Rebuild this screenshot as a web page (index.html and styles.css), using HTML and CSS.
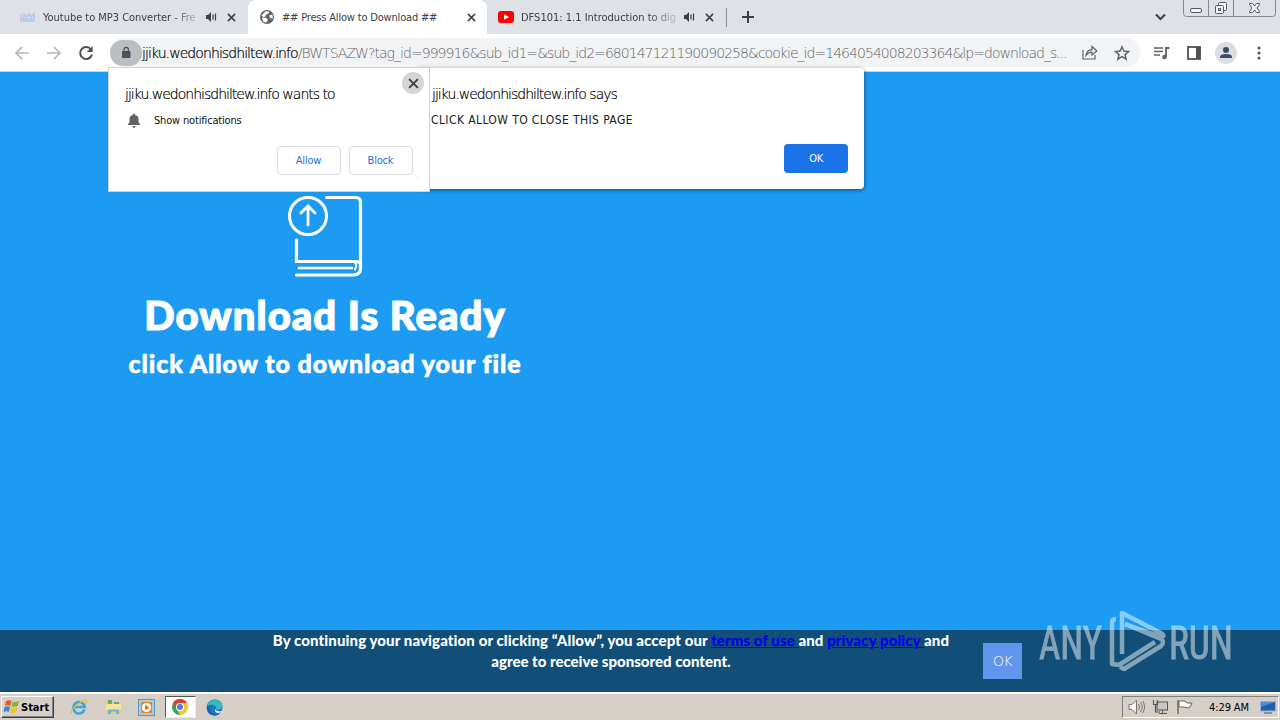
FILE: index.html
```html
<!DOCTYPE html>
<html lang="en">
<head>
<meta charset="utf-8">
<title>## Press Allow to Download ##</title>
<link rel="stylesheet" href="styles.css">
</head>
<body>
<svg width="0" height="0" class="defs">
  <symbol id="speaker" viewBox="0 0 12 12"><path d="M1 4h2l3-3v10L3 8H1z" fill="#3c4043"/><path d="M8 3.5v5M10.500 2.500v7" stroke="#3c4043" stroke-width="1.200"/></symbol>
  <symbol id="cross" viewBox="0 0 10 10"><path d="M1 1l8 8M9 1L1 9" stroke="#3c4043" stroke-width="1.700"/></symbol>
</svg>
<div class="screen">
  <header class="tabs">
    <div class="tab tab-first">
      <svg class="fav" width="16" height="16" viewBox="0 0 16 16"><path d="M1 5v7h13V5l-3 3-2-3-2 3-3-3v6" fill="none" stroke="#b4c8f0" stroke-width="1.600"/><path d="M1 10h13" stroke="#bccdf0" stroke-width="2"/></svg>
      <span class="tab-title t1">Youtube to MP3 Converter - Fre</span>
      <svg class="snd" width="12" height="12"><use href="#speaker"/></svg>
      <svg class="x" width="9" height="9"><use href="#cross"/></svg>
    </div>
    <div class="tab tab-active">
      <svg class="fav" width="16" height="16" viewBox="0 0 16 16"><circle cx="8" cy="8" r="7" fill="#5f6368"/><path d="M2.500 6.500l4-4.200 3.700.2-.8 2.300-2.600.9-.3 1.700-2.200.6zM3 8.500l4 .3 2 2-1.700 3-3.300-1.400zM10 6.500l3.500-1 .3 4-2.600-.3z" fill="#fff"/></svg>
      <span class="tab-title t2">## Press Allow to Download ##</span>
      <svg class="x" width="9" height="9"><use href="#cross"/></svg>
    </div>
    <div class="tab tab-third">
      <svg class="fav" width="16" height="12" viewBox="0 0 16 12"><rect width="16" height="12" rx="3" fill="#f00"/><path d="M6 3.200v5.600L11 6z" fill="#fff"/></svg>
      <span class="tab-title t3">DFS101: 1.1 Introduction to dig</span>
      <svg class="snd" width="12" height="12"><use href="#speaker"/></svg>
      <svg class="x" width="9" height="9"><use href="#cross"/></svg>
    </div>
    <i class="sep"></i>
    <svg class="plus" width="12" height="12" viewBox="0 0 12 12"><path d="M6 0v12M0 6h12" stroke="#3c4043" stroke-width="2"/></svg>
    <svg class="chev" width="11" height="8" viewBox="0 0 11 8"><path d="M1 1.500l4.500 4.500L10 1.500" fill="none" stroke="#3c4043" stroke-width="2"/></svg>
    <svg class="winbtns" width="94" height="17" viewBox="0 0 94 17"><path d="M.5 0v13.500q0 3 3 3h86q3 0 3-3V0M25.500 0v16M50.500 0v16" fill="none" stroke="#85888f"/><g fill="#f4f5f7" stroke="#55585f"><rect x="7.500" y="8.500" width="11" height="4" rx="1.500"/><rect x="35.500" y="2.500" width="8" height="8" rx="1"/><rect x="32.500" y="5.500" width="8" height="8" rx="1"/><rect x="35.500" y="8.500" width="2" height="2"/><path d="M66.500 3.500h3l2 2.500 2-2.500h3v1L74 8l2.500 3.500v1h-3l-2-2.500-2 2.500h-3v-1L69 8l-2.500-3.500z"/></g></svg>
  </header>

  <nav class="toolbar">
    <svg class="nav-ic back" width="16" height="14" viewBox="0 0 16 14"><path d="M15 7H2M8 1L2 7l6 6" fill="none" stroke="#b4b6b9" stroke-width="1.700"/></svg>
    <svg class="nav-ic fwd" width="16" height="14" viewBox="0 0 16 14"><path d="M1 7h13M8 1l6 6-6 6" fill="none" stroke="#b4b6b9" stroke-width="1.700"/></svg>
    <svg class="nav-ic reload" width="16" height="16" viewBox="0 0 16 16"><path d="M13 4.500A6 6 0 1 0 14 9.500" fill="none" stroke="#4d5156" stroke-width="2"/><path d="M14.700 1v6H8.700z" fill="#4d5156"/></svg>
    <div class="omnibox">
      <span class="lock"><svg width="10" height="13" viewBox="0 0 10 13"><rect x="1" y="5" width="8.500" height="7" rx="1" fill="#4d5156"/><path d="M3 5V3.500a2.200 2.200 0 0 1 4.400 0V5" fill="none" stroke="#4d5156" stroke-width="1.300"/></svg></span>
      <span class="url"><span class="host">jjiku.wedonhisdhiltew.info</span><span class="path">/BWTSAZW?tag_id=999916&amp;sub_id1=&amp;sub_id2=680147121190090258&amp;cookie_id=1464054008203364&amp;lp=download_s...</span></span>
      <svg class="share" width="16" height="15" viewBox="0 0 16 15"><path d="M1 5v9h12v-4" fill="none" stroke="#5f6368" stroke-width="1.200"/><path d="M4 10.500q.5-5.500 6-5.800V1.500L14.800 6 10 10V7.200Q6.500 7 4 10.500z" fill="none" stroke="#5f6368" stroke-width="1.200"/></svg>
      <svg class="star" width="16" height="16" viewBox="0 0 16 16"><path d="M8 1.800l1.900 4.300 4.600.4-3.500 3.100 1.100 4.600L8 11.700l-4.100 2.500L5 9.600 1.500 6.500l4.600-.4z" fill="none" stroke="#5f6368" stroke-width="1.500"/></svg>
    </div>
    <svg class="music" width="17" height="14" viewBox="0 0 17 14"><path d="M1 2h9M1 5.500h9M1 9h6" stroke="#5f6368" stroke-width="1.700"/><path d="M13 11V2h3.500" fill="none" stroke="#5f6368" stroke-width="1.800"/><circle cx="11.500" cy="11" r="2.300" fill="#5f6368"/></svg>
    <svg class="panel" width="14" height="14" viewBox="0 0 14 14"><rect x="1" y="1" width="12" height="12" fill="none" stroke="#4d5156" stroke-width="1.800"/><path d="M9 1h4.500v12H9z" fill="#4d5156"/></svg>
    <svg class="avatar" width="22" height="22" viewBox="0 0 22 22"><circle cx="11" cy="11" r="11" fill="#dadde2"/><circle cx="11" cy="8" r="3" fill="#3d4a66"/><path d="M5 16v-1q0-3 6-3t6 3v1z" fill="#3d4a66"/></svg>
    <svg class="dots" width="4" height="14" viewBox="0 0 4 14"><g fill="#4d5156"><circle cx="2" cy="2" r="1.500"/><circle cx="2" cy="7" r="1.500"/><circle cx="2" cy="12" r="1.500"/></g></svg>
  </nav>

  <main class="page">
    <section class="hero">
      <svg width="76" height="84" viewBox="0 0 76 84" fill="none" stroke="#fff" stroke-linecap="round"><circle cx="21" cy="22" r="18.500" stroke-width="3"/><path d="M21 31V13M14 19l7-7 7 7" stroke-width="2.800"/><path d="M39.500 3.500H69q4.500 0 4.500 5V74q0 7-7 7H9.500M9.500 46v21.500H68q5.500 0 5.500 4" stroke-width="3.200"/><path d="M12 74h53" stroke-width="2.600"/><path d="M68 68.500q2.500 2.500 0 7" stroke-width="2"/></svg>
      <h1>Download Is Ready</h1>
      <h2>click Allow to download your file</h2>
    </section>
  </main>

  <footer class="consent">
    <p><span class="line l1">By continuing your navigation or clicking “Allow”, you accept our <a>terms of use </a>and <a>privacy policy </a>and</span><span class="line l2">agree to receive sponsored content.</span></p>
    <button class="consent-ok">OK</button>
  </footer>

  <div class="taskbar">
    <button class="start"><svg width="17" height="16" viewBox="0 0 17 16"><path d="M3 2q3-1.500 5.500 0L7.300 7q-2.600-1.300-5.300 0z" fill="#e8592c"/><path d="M9.500 2.500q3 1.300 6.500-.5L14.700 7q-3 1.300-6.200.5z" fill="#7fb83c"/><path d="M1.700 8q2.800-1.300 5.400 0l-1.300 5q-2.500-1.300-5.300 0z" fill="#3f87cf"/><path d="M8.200 8.500q3 1.300 6.300-.2l-1.300 5q-3 1.500-6.200.2z" fill="#f4bf2a"/></svg><span>Start</span></button>
    <svg class="task ie" width="18" height="18" viewBox="0 0 18 18"><path d="M14.500 11.500A5.700 5.700 0 1 1 14.700 9H5" fill="none" stroke="#3fa3dc" stroke-width="2.600"/><path d="M2 16Q-1 13 8 6q7-5.500 8.500-3.500.8 1-1 3" fill="none" stroke="#e9bd3a" stroke-width="1.300"/></svg>
    <svg class="task folder" width="17" height="16" viewBox="0 0 17 16"><path d="M1 2h5l1 2h9v11H1z" fill="#e9cd6d"/><path d="M3 1h4v4H3zM9 3h5v4H9z" fill="#69aa66"/><path d="M1 5h15v6H1z" fill="#f6e49c"/><path d="M3 15v-4.500h11V15h-3v-2.500H6V15z" fill="#71b5e3"/></svg>
    <svg class="task wmp" width="17" height="17" viewBox="0 0 17 17"><rect x=".5" y=".5" width="16" height="16" fill="#a5cbea" stroke="#6794bd"/><rect x="3" y="3" width="11" height="11" rx="1" fill="#ee8420"/><circle cx="8.500" cy="8.500" r="4.600" fill="#fff"/><path d="M7 5.800v5.600L11.500 8.600z" fill="#e8761a"/></svg>
    <span class="running"><svg width="16" height="16" viewBox="0 0 16 16"><path d="M8 8L1.100 4A8 8 0 0 1 14.900 4z" fill="#e0402f"/><path d="M8 8l6.900-4A8 8 0 0 1 8 16z" fill="#f7c52c"/><path d="M8 8v8A8 8 0 0 1 1.100 4z" fill="#38a350"/><path d="M8 4h7l-3.500 6L8 16 4.500 10z" fill="#f7c52c"/><path d="M8 4h6.900A8 8 0 0 0 1.100 4L4.500 10z" fill="#e0402f"/><circle cx="8" cy="8" r="4" fill="#fff"/><circle cx="8" cy="8" r="3" fill="#427fe0"/></svg></span>
    <svg class="task edge" width="17" height="17" viewBox="0 0 17 17"><circle cx="8.500" cy="8.500" r="8" fill="#1b75bf"/><path d="M1 7Q3 .5 9 .5c5 0 8 3.500 7.500 7-.4 3-5 4-6.500 2.500 2-3-5-6-9-3z" fill="#36b8be"/><path d="M9.500 10q1 3 7 2l-1 2.500q-4 .5-6-1.500-1.500-1.500 0-3z" fill="#d9e6e8"/><path d="M5 7q-3 4 1 7 4 2.500 9-1-3 4-7 3.500Q1 15 1 8z" fill="#1765ab"/></svg>
    <div class="tray">
      <svg width="17" height="16" viewBox="0 0 17 16"><path d="M1 5.500h3L8.500 1v14L4 10.500H1z" fill="#f8f8f8" stroke="#777"/><path d="M10.500 5q2 3 0 6M12.500 3q3.500 5 0 10M14.800 2q3.500 6 0 12" fill="none" stroke="#777"/></svg>
      <svg width="17" height="16" viewBox="0 0 17 16"><rect x="5" y="3" width="10.500" height="8" fill="#c6c8c9" stroke="#555"/><path d="M10.500 11v3M7 14.500h8" stroke="#555"/><path d="M1.500 1v4.500h4V1M3.500 5.500V13H8" fill="none" stroke="#555" stroke-width="1.100"/></svg>
      <svg width="17" height="16" viewBox="0 0 17 16"><path d="M2 1v14" stroke="#666" stroke-width="1.500"/><path d="M3 2h6l2 2h5l-2 4-2 1-4-1H3z" fill="#f8f8f8" stroke="#666"/></svg>
      <span class="clock">4:29 AM</span>
      <svg width="16" height="14" viewBox="0 0 16 14"><rect x=".5" y="1.500" width="15" height="9.500" fill="#235fae" stroke="#8eb1d9"/><path d="M1 2h14L1 7z" fill="#4d8ed5"/><path d="M4 13h8" stroke="#555"/></svg>
    </div>
  </div>

  <section class="alert">
    <div class="alert-title">jjiku.wedonhisdhiltew.info says</div>
    <div class="alert-msg">CLICK ALLOW TO CLOSE THIS PAGE</div>
    <button class="alert-ok">OK</button>
  </section>

  <section class="prompt">
    <span class="prompt-close"><svg width="11" height="11"><use href="#cross"/></svg></span>
    <div class="prompt-title">jjiku.wedonhisdhiltew.info wants to</div>
    <div class="perm"><svg width="14" height="16" viewBox="0 0 14 16"><path d="M1 12v-1l1.500-1.500V6Q2.500 2.500 6 2V1q1-1 2 0v1q3.500.5 3.500 4v3.500L13 11v1zM5.500 13h3q-.2 2-1.500 2t-1.500-2z" fill="#5f6368"/></svg><span>Show notifications</span></div>
    <div class="actions"><button>Allow</button><button>Block</button></div>
  </section>

  <svg class="watermark" width="204" height="70" viewBox="0 0 204 70">
    <g fill="#fff" stroke="#fff" stroke-width=".9"><text x="4" y="53" textLength="63" lengthAdjust="spacingAndGlyphs">ANY</text><text x="134" y="53" textLength="64" lengthAdjust="spacingAndGlyphs">RUN</text></g>
    <g fill="none" stroke="#fff" stroke-width="4.500" stroke-linejoin="round"><path d="M81 13q-4 0-4 4v41l7 1 36-23"/><path d="M87 48V7l39 20q5 3 0 4L90 18"/><path d="M85 61l4 2 37-23q4-4 0-7L90 18"/></g>
  </svg>
</div>
</body>
</html>
```

FILE: styles.css
```css
* { box-sizing: border-box; }
body { margin: 0; overflow: hidden; }
button { margin: 0; padding: 0; font: inherit; }
svg { display: block; flex: none; }
.defs { position: absolute; }
.screen { position: relative; width: 1280px; height: 720px; display: flex; flex-direction: column; overflow: hidden; font-family: "DejaVu Sans Condensed", "DejaVu Sans", sans-serif; font-stretch: condensed; color: #202124; }

.tabs { height: 34px; flex: none; display: flex; align-items: center; background: #dee1e6; }
.tab { height: 34px; display: flex; align-items: center; font-size: 11px; }
.tab-first { width: 248px; padding-left: 20px; border-radius: 0 0 8px 0; }
.tab-active { width: 239px; padding-left: 11px; background: #fff; border-radius: 8px 8px 0 0; }
.tab-third { width: 239px; padding-left: 11px; }
.fav { margin-right: 7px; }
.tab-title { white-space: nowrap; color: #3c4043; }
.t1, .t3 { width: 155px; margin-right: 7px; -webkit-mask-image: linear-gradient(90deg, #000 82%, rgba(0,0,0,.2)); mask-image: linear-gradient(90deg, #000 82%, rgba(0,0,0,.2)); }
.t1 { letter-spacing: -0.03px; }
.t2 { width: 185px; letter-spacing: -0.18px; }
.snd { margin-right: 10px; }
.sep { width: 1px; height: 19px; background: #8d9197; }
.plus { margin-left: 15px; }
.chev { margin-left: auto; margin-right: 17px; }
.winbtns { align-self: flex-start; margin-right: 3px; }

.toolbar { height: 37px; flex: none; display: flex; align-items: center; padding-left: 14px; background: #fff; }
.back, .fwd { margin-right: 16px; }
.reload { margin-right: 16px; }
.omnibox { width: 1030px; height: 29px; display: flex; align-items: center; background: #f1f3f4; border-radius: 14px; }
.lock { width: 32px; height: 26px; border-radius: 13px; background: #bcbfc1; display: flex; align-items: center; justify-content: center; }
.url { width: 928px; white-space: nowrap; font-size: 14px; font-weight: 200; font-family: "DejaVu Sans Light", "DejaVu Sans Condensed", sans-serif; }
.host { letter-spacing: -0.92px; color: #000; -webkit-text-stroke: 0.2px #000; }
.path { letter-spacing: -0.96px; color: #5f6368; }
.share { margin-left: 12px; }
.star { margin-left: 16px; }
.music { margin-left: 13px; }
.panel { margin-left: 17px; }
.avatar { margin-left: 14px; }
.dots { margin-left: 20px; }

.page { flex: 1; background: #1d9bf3; border-top: 1px solid #b3dcfa; }
.hero { width: 650px; padding-top: 122px; display: flex; flex-direction: column; align-items: center; color: #fff; font-family: Lato, "Open Sans", sans-serif; }
.hero h1 { margin: 9px 0 0; font-size: 40px; line-height: 56px; font-weight: 900; white-space: nowrap; letter-spacing: 1.05px; -webkit-text-stroke: 1.2px #fff; }
.hero h2 { margin: 2px 0 0; font-size: 25px; line-height: 36px; font-weight: 900; white-space: nowrap; letter-spacing: 0.9px; -webkit-text-stroke: 0.6px #fff; }

.consent { height: 62px; flex: none; display: flex; background: #114f79; padding-left: 250px; color: #fff; border-bottom: 1px solid #0c4b74; }
.consent p { width: 722px; margin: 0; text-align: center; font: 900 15px/21px Lato, sans-serif; }
.line { display: block; white-space: nowrap; }
.l1 { letter-spacing: 0.1px; }
.consent a { color: #0000ee; text-decoration: underline; }
.consent-ok { width: 39px; height: 36px; margin: 13px 0 0 11px; border: 0; background: #6495ed; color: #fff; font-size: 14px; font-weight: 200; font-family: "DejaVu Sans Light", sans-serif; letter-spacing: -0.5px; }

.taskbar { height: 28px; flex: none; display: flex; align-items: center; border-top: 2px solid #fff; background: #d5cfc8; padding: 0 1px; }
.start { width: 53px; height: 22px; display: flex; align-items: center; gap: 1px; padding-left: 1px; background: #d5cfc8; border: 1px solid; border-color: #fff #404040 #404040 #fff; box-shadow: inset -1px -1px #808080; color: #000; font-size: 11px; font-weight: bold; }
.start span { letter-spacing: 0; }
.ie { margin-left: 16px; }
.folder { margin-left: 17px; }
.wmp { margin-left: 16px; }
.running { width: 31px; height: 22px; margin-left: 10px; padding-right: 1px; display: flex; align-items: center; justify-content: center; background: #fff; border: 1px solid; border-color: #555 #eee #eee #555; }
.edge { margin-left: 10px; }
.tray { width: 157px; height: 22px; margin-left: auto; display: flex; align-items: center; gap: 7px; padding-left: 5px; border: 1px solid; border-color: #808080 #fff #fff #808080; }
.clock { width: 44px; margin: 0 0 0 9px; white-space: nowrap; font-size: 11px; color: #000; letter-spacing: -0.1px; }

.alert { position: absolute; left: 416px; top: 68px; width: 448px; height: 121px; background: #fff; border-radius: 4px; box-shadow: 0 1px 4px rgba(0,0,0,.55); padding: 17px 16px 0; display: flex; flex-direction: column; }
.alert-title, .prompt-title { font-size: 14px; line-height: 18px; font-weight: 200; font-family: "DejaVu Sans Light", "DejaVu Sans", sans-serif; white-space: nowrap; color: #000; letter-spacing: -0.99px; -webkit-text-stroke: 0.2px #000; }
.alert-msg { margin: 9px 0 0 -1px; font-size: 12px; line-height: 17px; white-space: nowrap; letter-spacing: 0.4px; }
.alert-ok { align-self: flex-end; width: 64px; height: 29px; margin-top: 15px; border: 0; border-radius: 4px; background: #1a73e8; color: #fff; font-size: 11px; letter-spacing: -0.3px; }
.prompt { position: absolute; left: 108px; top: 67px; width: 322px; height: 125px; background: #fff; border: 1px solid #cfd1d3; padding: 17px 16px 0; display: flex; flex-direction: column; }
.prompt-close { position: absolute; top: 4px; right: 5px; width: 22px; height: 22px; border-radius: 50%; background: #d4d5d7; display: flex; align-items: center; justify-content: center; }
.perm { margin-top: 9px; padding-left: 2px; display: flex; align-items: center; gap: 13px; height: 17px; font-size: 11px; color: #111; white-space: nowrap; letter-spacing: -0.17px; }
.actions { display: flex; justify-content: flex-end; gap: 8px; margin-top: 17px; }
.actions button { width: 64px; height: 29px; border: 1px solid #dadce0; border-radius: 4px; padding-right: 1px; background: #fff; color: #1a73d8; font-size: 11px; letter-spacing: -0.2px; }

.watermark { position: absolute; left: 1035px; top: 606px; overflow: visible; opacity: .48; font-family: "Roboto Condensed", Roboto, sans-serif; font-size: 46px; }
```
